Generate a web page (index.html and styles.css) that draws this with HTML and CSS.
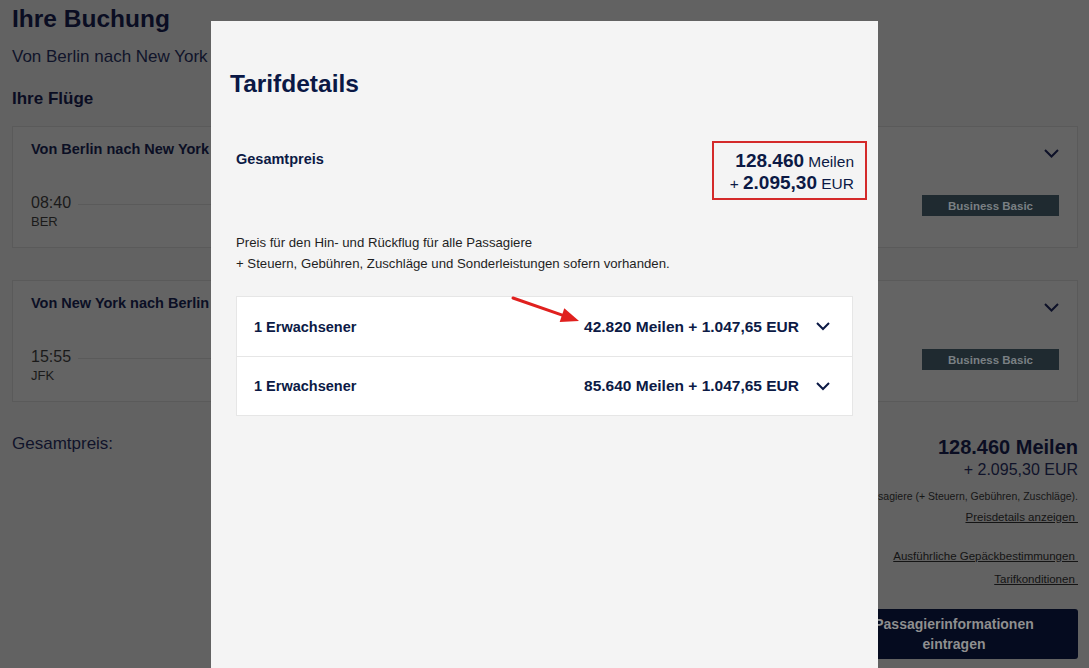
FILE: index.html
```html
<!DOCTYPE html>
<html lang="de">
<head>
<meta charset="utf-8">
<title>Ihre Buchung</title>
<link rel="stylesheet" href="styles.css">
</head>
<body>
<div class="page">
  <h1 class="page-title">Ihre Buchung</h1>
  <p class="route">Von Berlin nach New York</p>
  <h2 class="section-title">Ihre Flüge</h2>

  <div class="flight-card">
    <div class="card-head">
      <span class="card-title">Von Berlin nach New York</span>
      <svg class="card-chev" width="15" height="9" viewBox="0 0 15 9"><polyline points="1,1 7.5,7.5 14,1" fill="none" stroke="#0d1128" stroke-width="2"/></svg>
    </div>
    <div class="card-sub"></div>
    <div class="card-body">
      <div class="dep"><span class="time">08:40</span><span class="code">BER</span></div>
      <div class="track"></div>
      <span class="badge">Business Basic</span>
    </div>
  </div>

  <div class="flight-card">
    <div class="card-head">
      <span class="card-title">Von New York nach Berlin</span>
      <svg class="card-chev" width="15" height="9" viewBox="0 0 15 9"><polyline points="1,1 7.5,7.5 14,1" fill="none" stroke="#0d1128" stroke-width="2"/></svg>
    </div>
    <div class="card-sub"></div>
    <div class="card-body">
      <div class="dep"><span class="time">15:55</span><span class="code">JFK</span></div>
      <div class="track"></div>
      <span class="badge">Business Basic</span>
    </div>
  </div>

  <div class="summary">
    <div class="summary-label">Gesamtpreis:</div>
    <div class="summary-right">
      <div class="sum-miles">128.460 Meilen</div>
      <div class="sum-eur">+ 2.095,30 EUR</div>
      <div class="sum-note">Preis für den Hin- und Rückflug für alle Passagiere (+ Steuern, Gebühren, Zuschläge).</div>
      <a class="link link-first">Preisdetails anzeigen </a>
      <a class="link link-gap">Ausführliche Gepäckbestimmungen </a>
      <a class="link link-small-gap">Tarifkonditionen </a>
      <button class="cta">Passagierinformationen eintragen</button>
    </div>
  </div>
</div>

<div class="modal">
  <h2 class="modal-title">Tarifdetails</h2>
  <div class="modal-body">
    <div class="total-row">
      <div class="total-label">Gesamtpreis</div>
      <div class="total-price">
        <div class="total-line"><strong>128.460</strong> Meilen</div>
        <div class="total-line">+ <strong>2.095,30</strong> EUR</div>
      </div>
    </div>
    <p class="fare-note">Preis für den Hin- und Rückflug für alle Passagiere<br>+ Steuern, Gebühren, Zuschläge und Sonderleistungen sofern vorhanden.</p>
    <div class="pax-table">
      <div class="pax-row">
        <span class="pax-label">1 Erwachsener</span>
        <span class="pax-price">42.820 Meilen + 1.047,65 EUR</span>
        <svg class="chev" width="14" height="9" viewBox="0 0 14 9"><polyline points="1,1 7,7 13,1" fill="none" stroke="#0c1a45" stroke-width="2"/></svg>
      </div>
      <div class="pax-row">
        <span class="pax-label">1 Erwachsener</span>
        <span class="pax-price">85.640 Meilen + 1.047,65 EUR</span>
        <svg class="chev" width="14" height="9" viewBox="0 0 14 9"><polyline points="1,1 7,7 13,1" fill="none" stroke="#0c1a45" stroke-width="2"/></svg>
      </div>
      <svg class="annotation-arrow" width="80" height="34" viewBox="0 0 80 34">
        <line x1="7" y1="2" x2="57" y2="19.4" stroke="#e0201e" stroke-width="3" stroke-linecap="round"/>
        <polygon points="73,25 53.7,25.9 58.3,12.3" fill="#e0201e"/>
      </svg>
    </div>
  </div>
</div>
</body>
</html>
```
FILE: styles.css
```css
* { box-sizing: border-box; }

html, body {
  margin: 0;
  height: 100%;
}

body {
  background: #626262;
  font-family: "Liberation Sans", Arial, sans-serif;
  color: #0d1128;
  overflow: hidden;
}

.page {
  padding: 4px 11px 0 12px;
}

.page-title {
  margin: 0;
  font-size: 24.5px;
  line-height: 30px;
  font-weight: 700;
  color: #0a0d22;
}

.route {
  margin: 12px 0 0;
  font-size: 17px;
  line-height: 22px;
  color: #10142a;
}

.section-title {
  margin: 20px 0 16px;
  font-size: 17px;
  line-height: 22px;
  font-weight: 700;
  color: #0a0d22;
}

.flight-card {
  background: #646464;
  border: 1px solid #5a5a5a;
  padding: 12px 18px 16px 18px;
}

.flight-card + .flight-card {
  margin-top: 32px;
}

.card-head {
  display: flex;
  justify-content: space-between;
  align-items: flex-start;
  height: 20px;
}

.card-title {
  font-size: 14.5px;
  line-height: 20px;
  font-weight: 700;
  color: #0b0f24;
}

.card-chev {
  margin-top: 10px;
}

.card-sub {
  height: 18px;
  margin-top: 2px;
}

.card-body {
  display: flex;
  align-items: flex-start;
  margin-top: 14px;
}

.dep {
  display: flex;
  flex-direction: column;
}

.time {
  font-size: 16px;
  line-height: 20px;
  color: #1a1a1a;
}

.code {
  font-size: 13px;
  line-height: 18px;
  color: #1a1a1a;
}

.track {
  flex: 1;
  height: 1px;
  background: #5a5a5a;
  margin: 11px 60px 0 7px;
}

.badge {
  width: 137px;
  height: 21px;
  margin-top: 2px;
  background: #1f2a30;
  color: #7a8084;
  font-weight: 700;
  font-size: 11.5px;
  display: flex;
  align-items: center;
  justify-content: center;
}

.summary {
  display: flex;
  justify-content: space-between;
  align-items: flex-start;
  margin-top: 31px;
}

.summary-label {
  font-size: 17px;
  line-height: 22px;
  color: #10132a;
}

.summary-right {
  display: flex;
  flex-direction: column;
  align-items: flex-end;
  text-align: right;
  padding-top: 2px;
}

.sum-miles {
  font-size: 20px;
  line-height: 24px;
  font-weight: 700;
  color: #0a0d22;
}

.sum-eur {
  font-size: 16px;
  line-height: 22px;
  color: #10132a;
}

.sum-note {
  margin-top: 7px;
  font-size: 10.5px;
  line-height: 16px;
  color: #161616;
  white-space: nowrap;
}

.link {
  display: block;
  font-size: 11.5px;
  line-height: 16px;
  color: #141414;
  text-decoration: underline;
  white-space: pre;
}

.link-first { margin-top: 5px; }
.link-gap { margin-top: 23px; }
.link-small-gap { margin-top: 7px; }

.cta {
  margin-top: 22px;
  width: 248px;
  padding: 5px 20px;
  border: none;
  border-radius: 3px;
  background: #050b1f;
  color: #8f8f8f;
  font-family: inherit;
  font-size: 14px;
  line-height: 20px;
  font-weight: 700;
  text-align: center;
}

/* Modal dialog over the dimmed page */
.modal {
  position: fixed;
  top: 21px;
  left: 0;
  right: 0;
  margin: 0 auto;
  width: 667px;
  height: 700px;
  background: #f4f4f4;
}

.modal-title {
  margin: 0;
  padding: 48px 19px 0;
  font-size: 24.5px;
  line-height: 30px;
  font-weight: 700;
  color: #0a1845;
}

.modal-body {
  padding: 0 25px;
}

.total-row {
  display: flex;
  justify-content: space-between;
  align-items: flex-start;
  margin-top: 42px;
}

.total-label {
  margin-top: 8px;
  font-size: 14.5px;
  line-height: 20px;
  font-weight: 700;
  color: #0c1a45;
}

.total-price {
  border: 2px solid #d42a2a;
  padding: 7px 11px 4px 16px;
  margin-right: -14px;
  text-align: right;
  color: #0c1a45;
}

.total-line {
  height: 22px;
  font-size: 15.5px;
  line-height: 22px;
  white-space: nowrap;
}

.total-line strong {
  font-size: 19px;
}

.fare-note {
  margin: 32px 0 0;
  font-size: 13.2px;
  line-height: 21px;
  color: #1f1f1f;
}

.pax-table {
  position: relative;
  margin-top: 22px;
  background: #ffffff;
  border: 1px solid #e6e6e6;
}

.pax-row {
  display: flex;
  align-items: center;
  height: 59px;
  padding: 0 22px 0 17px;
}

.pax-row + .pax-row {
  border-top: 1px solid #e6e6e6;
}

.pax-label {
  flex: 1;
  font-size: 14.5px;
  font-weight: 700;
  color: #0c1a45;
}

.pax-price {
  font-size: 15.5px;
  font-weight: 700;
  color: #0c1a45;
}

.chev {
  margin-left: 17px;
}

.annotation-arrow {
  position: absolute;
  left: 269px;
  top: -1px;
}
```
